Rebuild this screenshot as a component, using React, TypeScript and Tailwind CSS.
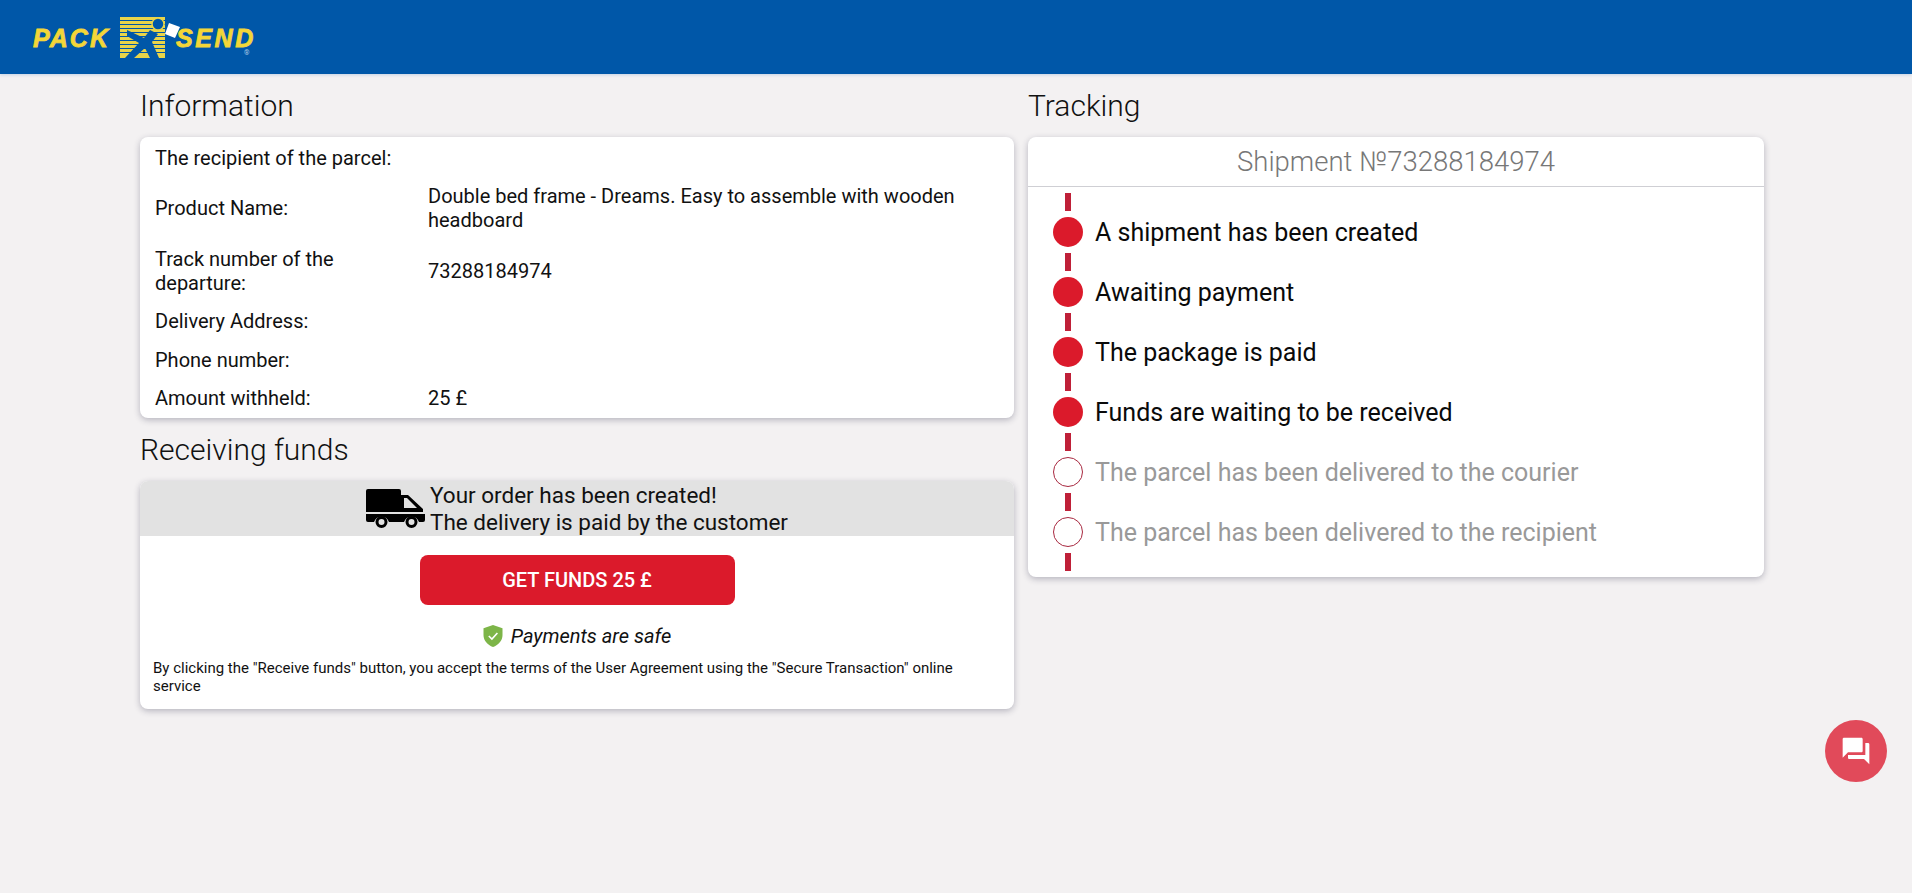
import React from 'react';

const infoRows = [
  { label: 'The recipient of the parcel:', value: '' },
  { label: 'Product Name:', value: 'Double bed frame - Dreams. Easy to assemble with wooden headboard' },
  { label: 'Track number of the departure:', value: '73288184974' },
  { label: 'Delivery Address:', value: '' },
  { label: 'Phone number:', value: '' },
  { label: 'Amount withheld:', value: '25 £' },
];

const steps = [
  { title: 'A shipment has been created', done: true },
  { title: 'Awaiting payment', done: true },
  { title: 'The package is paid', done: true },
  { title: 'Funds are waiting to be received', done: true },
  { title: 'The parcel has been delivered to the courier', done: false },
  { title: 'The parcel has been delivered to the recipient', done: false },
];

const LogoMark = () => (
  <svg width="62" height="44" viewBox="0 0 62 44" className="ml-[10px]">
    {[1, 5, 9, 13, 17, 21, 25, 29, 33, 37, 39].map((y) => (
      <rect key={y} x="0" y={y} width="45" height="3" fill="#e8d44a" />
    ))}
    <path d="M7 14 L24 22 L30 14 L38 18 L32 26 L39 42 L30 42 L25 32 L14 42 L5 42 L19 27 L7 20 Z" fill="#0057a8" />
    <circle cx="38" cy="8" r="6" fill="#0057a8" stroke="#e8d44a" strokeWidth="1.5" />
    <path d="M49 7 L60 11 L55 22 L45 18 Z" fill="#ffffff" />
  </svg>
);

const Logo = () => (
  <div className="relative flex items-center pl-[33px] pt-[2px]">
    <span className="font-['Liberation_Sans',sans-serif] text-[25px] font-bold italic leading-none tracking-[2px] text-[#f3d638] [-webkit-text-stroke:0.8px_#f3d638]">PACK</span>
    <LogoMark />
    <span className="-ml-[6px] font-['Liberation_Sans',sans-serif] text-[25px] font-bold italic leading-none tracking-[2.6px] text-[#f3d638] [-webkit-text-stroke:0.8px_#f3d638]">SEND</span>
    <span className="absolute left-[244px] top-[36px] text-[7px] leading-none text-[#a9c8e6]">®</span>
  </div>
);

const TruckIcon = () => (
  <svg width="59" height="39" viewBox="0 0 59 39" className="shrink-0">
    <path d="M2 0 H33 a2 2 0 0 1 2 2 V6 H42 L57 20 V23 H0 V2 a2 2 0 0 1 2 -2 Z" fill="#000" />
    <path d="M38 9 H41 L51 19 H38 Z" fill="#e2e2e2" />
    <path d="M0 25 H59 V31 a2 2 0 0 1 -2 2 H53 a8 8 0 0 0 -15 0 H23 a8 8 0 0 0 -15 0 H2 a2 2 0 0 1 -2 -2 Z" fill="#000" />
    <circle cx="15.5" cy="33" r="4.5" fill="#e2e2e2" stroke="#000" strokeWidth="3" />
    <circle cx="45.5" cy="33" r="4.5" fill="#e2e2e2" stroke="#000" strokeWidth="3" />
  </svg>
);

const ShieldIcon = () => (
  <svg width="20" height="22" viewBox="0 0 20 22" className="shrink-0">
    <path d="M10 0 L19.5 3.2 V10 C19.5 15.5 15.5 20 10 22 C4.5 20 .5 15.5 .5 10 V3.2 Z" fill="#7db548" />
    <path d="M5.8 11 L8.9 14 L14.4 8" fill="none" stroke="#fff" strokeWidth="1.6" />
  </svg>
);

const ChatIcon = () => (
  <svg width="32" height="32" viewBox="0 0 24 24" fill="currentColor">
    <path d="M21 6h-2v9H6v2c0 .55.45 1 1 1h11l4 4V7c0-.55-.45-1-1-1zm-4 6V3c0-.55-.45-1-1-1H3c-.55 0-1 .45-1 1v14l4-4h10c.55 0 1-.45 1-1z" />
  </svg>
);

const Connector = () => <div className="my-[6px] ml-[37px] h-[18px] w-[6px] bg-[#bf2038]" />;

export default function App() {
  return (
    <div className="min-h-[893px] bg-[#f3f1f2] font-['Roboto',sans-serif] text-[#111]">
      <header className="flex h-[74px] items-center bg-[#0057a8] shadow-[0_1px_3px_rgba(0,87,168,0.2)]">
        <Logo />
      </header>

      <main className="flex gap-[14px] pl-[140px]">
        <div className="w-[874px]">
          <h2 className="h-[63px] pt-[13px] text-[30px] font-light leading-[38px]">Information</h2>
          <section className="rounded-lg bg-white pl-[15px] shadow-[0_2px_6px_rgba(40,40,70,0.3)]">
            {infoRows.map((row) => (
              <div key={row.label} className="flex items-center py-[7.2px] text-[20px] leading-6 first:pt-[9px] last:pb-[8.4px]">
                <div className="w-[273px] shrink-0 pr-[20px]">{row.label}</div>
                <div className="pr-[40px]">{row.value}</div>
              </div>
            ))}
          </section>

          <h2 className="h-[63px] pt-[13px] text-[30px] font-light leading-[38px]">Receiving funds</h2>
          <section className="rounded-lg bg-white pb-[14px] shadow-[0_2px_6px_rgba(40,40,70,0.3)]">
            <div className="flex h-[55px] items-center justify-center gap-[5px] rounded-t-lg bg-[#e2e2e2] text-[22.5px] leading-[27px]">
              <TruckIcon />
              <div>
                <div>Your order has been created!</div>
                <div>The delivery is paid by the customer</div>
              </div>
            </div>
            <div className="mt-[19px] flex justify-center">
              <button className="h-[50px] w-[315px] rounded-lg bg-[#db1a2b] text-[20px] font-medium text-white">
                GET FUNDS 25 £
              </button>
            </div>
            <div className="mt-[19px] flex items-center justify-center gap-[8px] text-[20px] italic leading-6">
              <ShieldIcon />
              <span>Payments are safe</span>
            </div>
            <p className="mt-[11px] pl-[13px] pr-[30px] text-[15px] leading-[18px]">
              By clicking the "Receive funds" button, you accept the terms of the User Agreement using the "Secure Transaction" online service
            </p>
          </section>
        </div>

        <div className="w-[736px]">
          <h2 className="h-[63px] pt-[13px] text-[30px] font-light leading-[38px]">Tracking</h2>
          <section className="flow-root rounded-lg bg-white shadow-[0_2px_6px_rgba(40,40,70,0.3)]">
            <div className="h-[50px] border-b border-[#cfcfd4] text-center text-[27.5px] font-light leading-[49px] text-[#777]">
              Shipment №73288184974
            </div>
            <Connector />
            {steps.map((step) => (
              <React.Fragment key={step.title}>
                <div className={`flex h-[30px] items-center gap-[12px] pl-[25px] text-[25px] leading-[30px] ${step.done ? 'text-[#0a0a0a]' : 'text-[#999]'}`}>
                  {step.done ? (
                    <div className="h-[30px] w-[30px] shrink-0 rounded-full bg-[#db1a2b]" />
                  ) : (
                    <div className="h-[30px] w-[30px] shrink-0 rounded-full border border-[#a8283f]" />
                  )}
                  <span className="pt-[2px]">{step.title}</span>
                </div>
                <Connector />
              </React.Fragment>
            ))}
          </section>
        </div>
      </main>

      <button className="fixed bottom-[111px] right-[25px] flex h-[62px] w-[62px] items-center justify-center rounded-full bg-[#e14a5a] text-white">
        <ChatIcon />
      </button>
    </div>
  );
}
